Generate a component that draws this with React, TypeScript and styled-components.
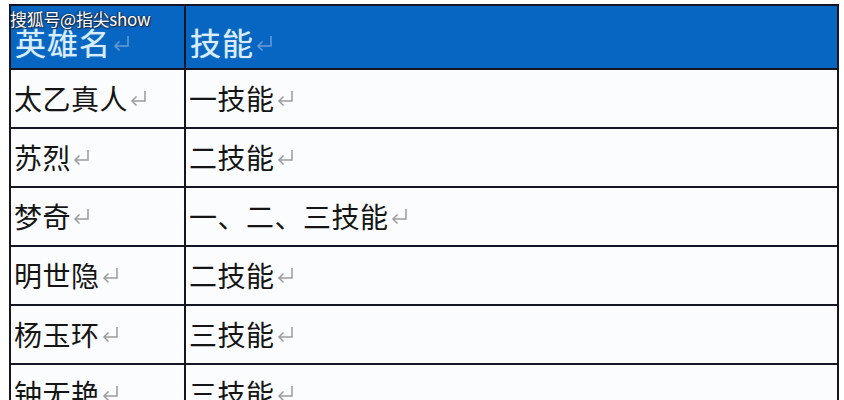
import React from "react";
import styled, { createGlobalStyle } from "styled-components";

const GlobalStyle = createGlobalStyle`
  html, body {
    margin: 0;
    padding: 0;
    background: #ffffff;
    overflow: hidden;
  }
  body {
    font-family: "Noto Sans CJK SC", "Noto Sans", sans-serif;
  }
`;

const Page = styled.div`
  position: relative;
  width: 844px;
  height: 400px;
  overflow: hidden;
  padding: 4px 0 0 9px;
  box-sizing: border-box;
`;

const Table = styled.table`
  border-collapse: collapse;
  width: 830px;
  table-layout: fixed;
`;

const HeadCell = styled.th<{ $w?: number }>`
  width: ${(p) => (p.$w ? `${p.$w}px` : "auto")};
  height: 64px;
  background: #0866c3;
  border: 2.5px solid #141624;
  color: #d9edff;
  font-size: 31px;
  font-weight: 400;
  text-align: left;
  padding: 8px 0 0 4px;
  box-sizing: border-box;
  text-shadow: 0 0 1px #9fcfff;
  letter-spacing: 1px;
`;

const Cell = styled.td`
  height: 59px;
  border: 2.5px solid #141624;
  background: #fbfcfe;
  color: #151515;
  font-size: 28px;
  padding: 0 0 2px 3px;
  box-sizing: border-box;
  white-space: nowrap;
  letter-spacing: 0.5px;
`;

const Mark = styled.svg<{ $light?: boolean }>`
  display: inline-block;
  width: 22px;
  height: 20px;
  margin-left: 0;
  vertical-align: 2px;
  stroke: ${(p) => (p.$light ? "#6b9ad6" : "#9a9a9a")};
  fill: none;
  stroke-width: 1.5;
`;

const Watermark = styled.div`
  position: absolute;
  left: 10px;
  top: 6px;
  color: #ffffff;
  font-family: "Noto Sans CJK SC", "Liberation Sans", sans-serif;
  font-size: 17px;
  letter-spacing: -0.3px;
  text-shadow: 0 0 2px #1a2a40, 1px 1px 1px #1a2a40, -1px 0 1px #1a2a40;
`;

function Return({ light }: { light?: boolean }) {
  return (
    <Mark $light={light} viewBox="0 0 22 20">
      <path d="M17 3 V13 H4" />
      <path d="M8.5 8.5 L4 13 L8.5 17.5" />
    </Mark>
  );
}

const rows: [string, string][] = [
  ["太乙真人", "一技能"],
  ["苏烈", "二技能"],
  ["梦奇", "一、二、三技能"],
  ["明世隐", "二技能"],
  ["杨玉环", "三技能"],
  ["钟无艳", "三技能"],
];

export default function App() {
  return (
    <>
      <GlobalStyle />
      <Page>
        <Table>
          <thead>
            <tr>
              <HeadCell $w={175}>
                英雄名
                <Return light />
              </HeadCell>
              <HeadCell>
                技能
                <Return light />
              </HeadCell>
            </tr>
          </thead>
          <tbody>
            {rows.map(([name, skill]) => (
              <tr key={name}>
                <Cell>
                  {name}
                  <Return />
                </Cell>
                <Cell>
                  {skill}
                  <Return />
                </Cell>
              </tr>
            ))}
          </tbody>
        </Table>
        <Watermark>搜狐号@指尖show</Watermark>
      </Page>
    </>
  );
}
